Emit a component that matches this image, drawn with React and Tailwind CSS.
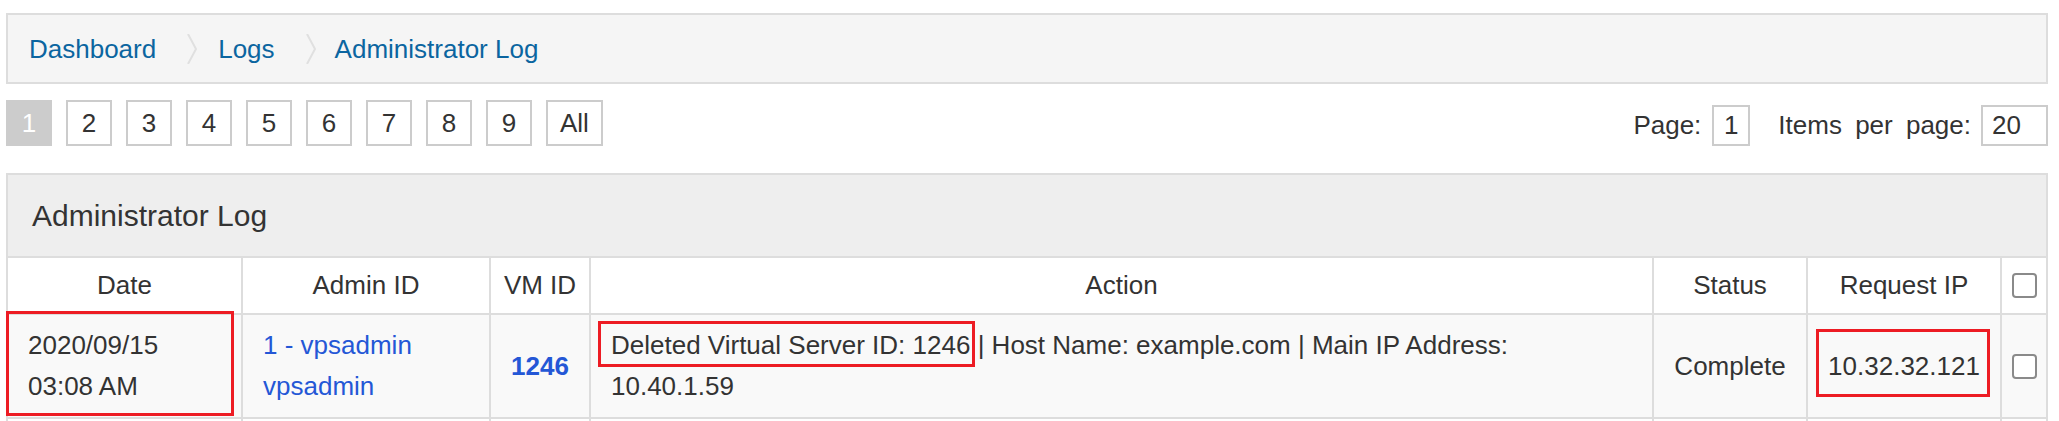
import React from 'react';

const pages = ['1', '2', '3', '4', '5', '6', '7', '8', '9', 'All'];

const rowGrid = 'grid grid-cols-[233px_248px_100px_1063px_154px_194px_1fr]';

function Chevron() {
  return (
    <svg width="10" height="30" viewBox="0 0 10 30" className="shrink-0">
      <polyline points="1,0 9,15 1,30" fill="none" stroke="#e0e0e0" strokeWidth="2" />
    </svg>
  );
}

function Checkbox() {
  return <span className="block w-[25px] h-[25px] rounded-[4px] border-2 border-[#8a8a8a] bg-white" />;
}

function RedMark({ className }) {
  return <span className={`absolute border-[3px] border-[#ed1c24] pointer-events-none ${className}`} />;
}

export default function App() {
  return (
    <div className="w-full h-[421px] overflow-hidden bg-white pl-[6px] pr-[11px] pt-[13px] text-[26px] text-[#333] font-['Liberation_Sans',Arial,sans-serif]">
      {/* Breadcrumb */}
      <div className="h-[71px] flex items-center pl-[21px] bg-[#f5f5f5] border-2 border-[#ddd] text-[#0b65a0]">
        <a href="#" className="leading-none">Dashboard</a>
        <span className="ml-[31px]"><Chevron /></span>
        <a href="#" className="ml-[21px] leading-none">Logs</a>
        <span className="ml-[31px]"><Chevron /></span>
        <a href="#" className="ml-[19px] leading-none">Administrator Log</a>
      </div>

      {/* Pagination */}
      <div className="mt-[16px] flex items-end justify-between">
        <div className="flex gap-[14px]">
          {pages.map((p, i) => (
            <span
              key={p}
              className={
                i === 0
                  ? 'h-[46px] min-w-[46px] flex items-center justify-center bg-[#ccc] border-2 border-[#ccc] text-white'
                  : 'h-[46px] min-w-[46px] px-[12px] flex items-center justify-center bg-white border-2 border-[#ccc]'
              }
            >
              {p}
            </span>
          ))}
        </div>
        <div className="flex items-center">
          <span>Page:</span>
          <span className="ml-[11px] w-[38px] h-[41px] flex items-center justify-center border-2 border-[#ccc]">1</span>
          <span className="ml-[28px] [word-spacing:6px]">Items per page:</span>
          <span className="ml-[10px] w-[67px] h-[41px] flex items-center pl-[9px] border-2 border-[#ccc]">20</span>
        </div>
      </div>

      {/* Panel */}
      <div className="mt-[27px] border-2 border-[#ddd]">
        <div className="h-[81px] flex items-center pl-[24px] bg-[#eee] text-[30px]">Administrator Log</div>

        {/* Column headers */}
        <div className={`${rowGrid} h-[57px] border-t-2 border-[#ddd] bg-white`}>
          <div className="flex items-center justify-center">Date</div>
          <div className="flex items-center justify-center border-l-2 border-[#ddd]">Admin ID</div>
          <div className="flex items-center justify-center border-l-2 border-[#ddd]">VM ID</div>
          <div className="flex items-center justify-center border-l-2 border-[#ddd]">Action</div>
          <div className="flex items-center justify-center border-l-2 border-[#ddd]">Status</div>
          <div className="flex items-center justify-center border-l-2 border-[#ddd]">Request IP</div>
          <div className="flex items-center justify-center border-l-2 border-[#ddd]"><Checkbox /></div>
        </div>

        {/* Log row */}
        <div className={`${rowGrid} h-[104px] border-t-2 border-[#ddd] bg-[#f9f9f9] leading-[41px]`}>
          <div className="relative flex flex-col justify-center pl-[20px]">
            <span>2020/09/15</span>
            <span>03:08 AM</span>
            <RedMark className="left-[-2px] top-[-4px] w-[228px] h-[105px]" />
          </div>
          <div className="flex flex-col justify-center pl-[20px] border-l-2 border-[#ddd] text-[#2457d6]">
            <a href="#">1 - vpsadmin</a>
            <a href="#">vpsadmin</a>
          </div>
          <div className="flex items-center justify-center border-l-2 border-[#ddd]">
            <a href="#" className="font-bold text-[#2457d6]">1246</a>
          </div>
          <div className="flex items-center pl-[20px] pr-[60px] border-l-2 border-[#ddd]">
            <p>
              <span className="relative inline-block">
                Deleted Virtual Server ID: 1246
                <RedMark className="-left-[13px] -right-[5px] -top-[4px] -bottom-[1px]" />
              </span>{' '}
              | Host Name: example.com | Main IP Address: 10.40.1.59
            </p>
          </div>
          <div className="flex items-center justify-center border-l-2 border-[#ddd]">Complete</div>
          <div className="flex items-center justify-center border-l-2 border-[#ddd]">
            <span className="relative inline-block">
              10.32.32.121
              <RedMark className="-left-[12px] -right-[10px] -top-[17px] -bottom-[10px]" />
            </span>
          </div>
          <div className="flex items-center justify-center border-l-2 border-[#ddd]"><Checkbox /></div>
        </div>

        {/* Next row (cut off) */}
        <div className={`${rowGrid} h-[104px] border-t-2 border-[#ddd] bg-white`}>
          <div />
          <div className="border-l-2 border-[#ddd]" />
          <div className="border-l-2 border-[#ddd]" />
          <div className="border-l-2 border-[#ddd]" />
          <div className="border-l-2 border-[#ddd]" />
          <div className="border-l-2 border-[#ddd]" />
          <div className="border-l-2 border-[#ddd]" />
        </div>
      </div>
    </div>
  );
}
